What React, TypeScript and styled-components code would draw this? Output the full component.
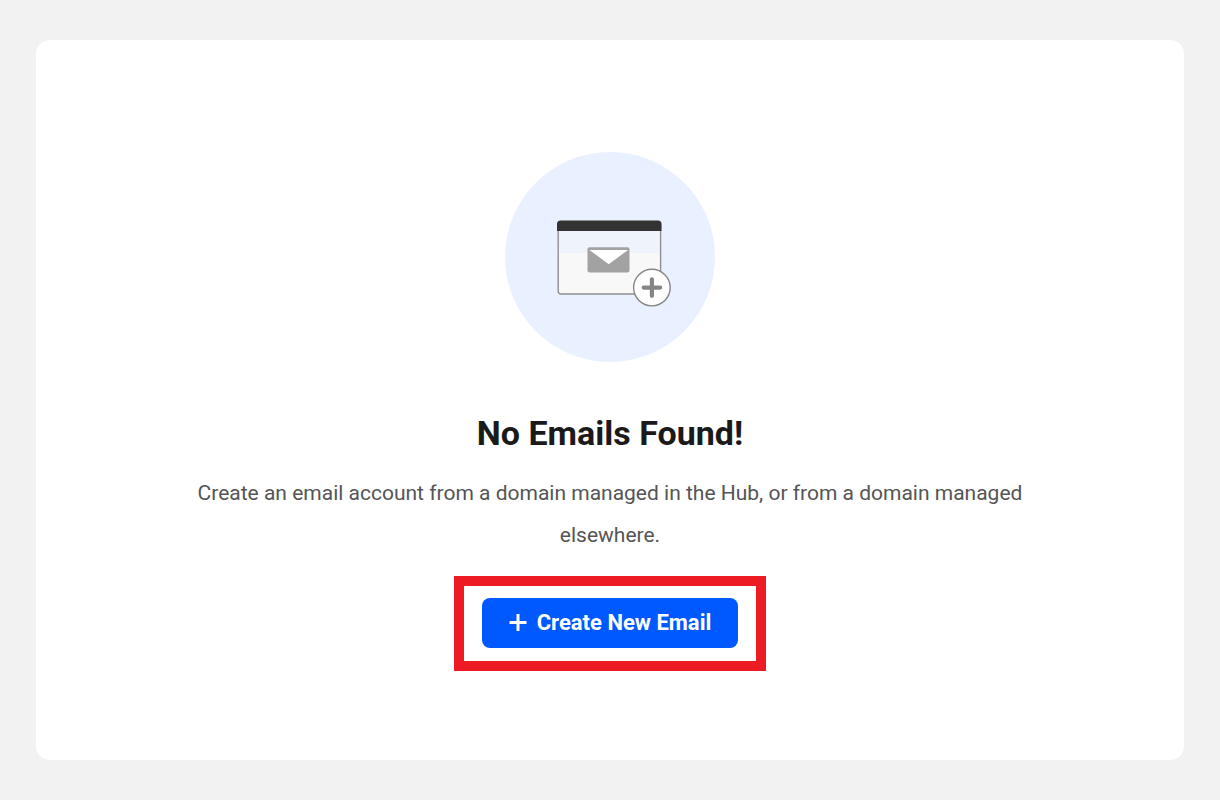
import React from "react";
import styled, { createGlobalStyle } from "styled-components";

const GlobalStyle = createGlobalStyle`
  *, *::before, *::after { box-sizing: border-box; }
  body {
    margin: 0;
    background: #f2f2f2;
    font-family: Roboto, "Liberation Sans", sans-serif;
  }
`;

const Page = styled.main`
  display: flex;
  min-height: 100vh;
  padding: 40px 36px;
`;

const Card = styled.section`
  flex: 1;
  display: flex;
  flex-direction: column;
  align-items: center;
  padding: 112px 24px 88px;
  border-radius: 14px;
  background: #fff;
  text-align: center;
`;

const Illustration = styled.svg`
  display: block;
  width: 210px;
  height: 210px;
`;

const Title = styled.h1`
  margin: 50px 0 0;
  color: #1a1a1a;
  font-size: 34px;
  font-weight: 700;
  line-height: 42px;
`;

const Description = styled.p`
  max-width: 840px;
  margin: 18px 0 20px;
  color: #555;
  font-size: 21px;
  line-height: 42px;
`;

const Highlight = styled.div`
  padding: 12px 18px 13px;
  border: 10px solid #ed1c24;
`;

const PrimaryButton = styled.button`
  display: flex;
  align-items: center;
  justify-content: center;
  gap: 10px;
  height: 50px;
  padding: 0 27px;
  border: 0;
  border-radius: 8px;
  background: #0059ff;
  color: #fff;
  font: 700 22px/28px Roboto, "Liberation Sans", sans-serif;
  cursor: pointer;
`;

const PlusIcon = styled.svg`
  display: block;
  width: 18px;
  height: 18px;
`;

function MailboxIllustration() {
  return (
    <Illustration viewBox="0 0 210 210" aria-hidden="true">
      <circle cx="105" cy="105" r="105" fill="#e9f0ff" />
      <rect x="53.2" y="70" width="102.4" height="72" rx="3" fill="#f8f8f8" />
      <rect x="53.2" y="78" width="102.4" height="23" fill="#eff3fc" />
      <rect x="53.2" y="70" width="102.4" height="72" rx="3" fill="none" stroke="#8f8f8f" strokeWidth="1.4" />
      <path d="M52 79V72a3.5 3.5 0 0 1 3.5-3.5h97.500a3.500 3.500 0 0 1 3.500 3.500v7z" fill="#333" />
      <rect x="82.500" y="95.200" width="42" height="25.400" rx="2" fill="#a2a2a2" />
      <path d="M84.500 98h38.500l-19.300 14.200z" fill="#fff" />
      <circle cx="146.900" cy="135.600" r="18.300" fill="#fff" stroke="#858585" strokeWidth="1.4" />
      <path d="M138.700 135.600h16.400M146.900 127.400v16.400" stroke="#858585" strokeWidth="4.200" strokeLinecap="round" />
    </Illustration>
  );
}

export default function App() {
  return (
    <>
      <GlobalStyle />
      <Page>
        <Card>
          <MailboxIllustration />
          <Title>No Emails Found!</Title>
          <Description>
            Create an email account from a domain managed in the Hub, or from a domain managed elsewhere.
          </Description>
          <Highlight>
            <PrimaryButton type="button">
              <PlusIcon viewBox="0 0 18 18" aria-hidden="true">
                <path d="M0.500 8.500h17M9 0v17" stroke="#fff" strokeWidth="3" />
              </PlusIcon>
              Create New Email
            </PrimaryButton>
          </Highlight>
        </Card>
      </Page>
    </>
  );
}
